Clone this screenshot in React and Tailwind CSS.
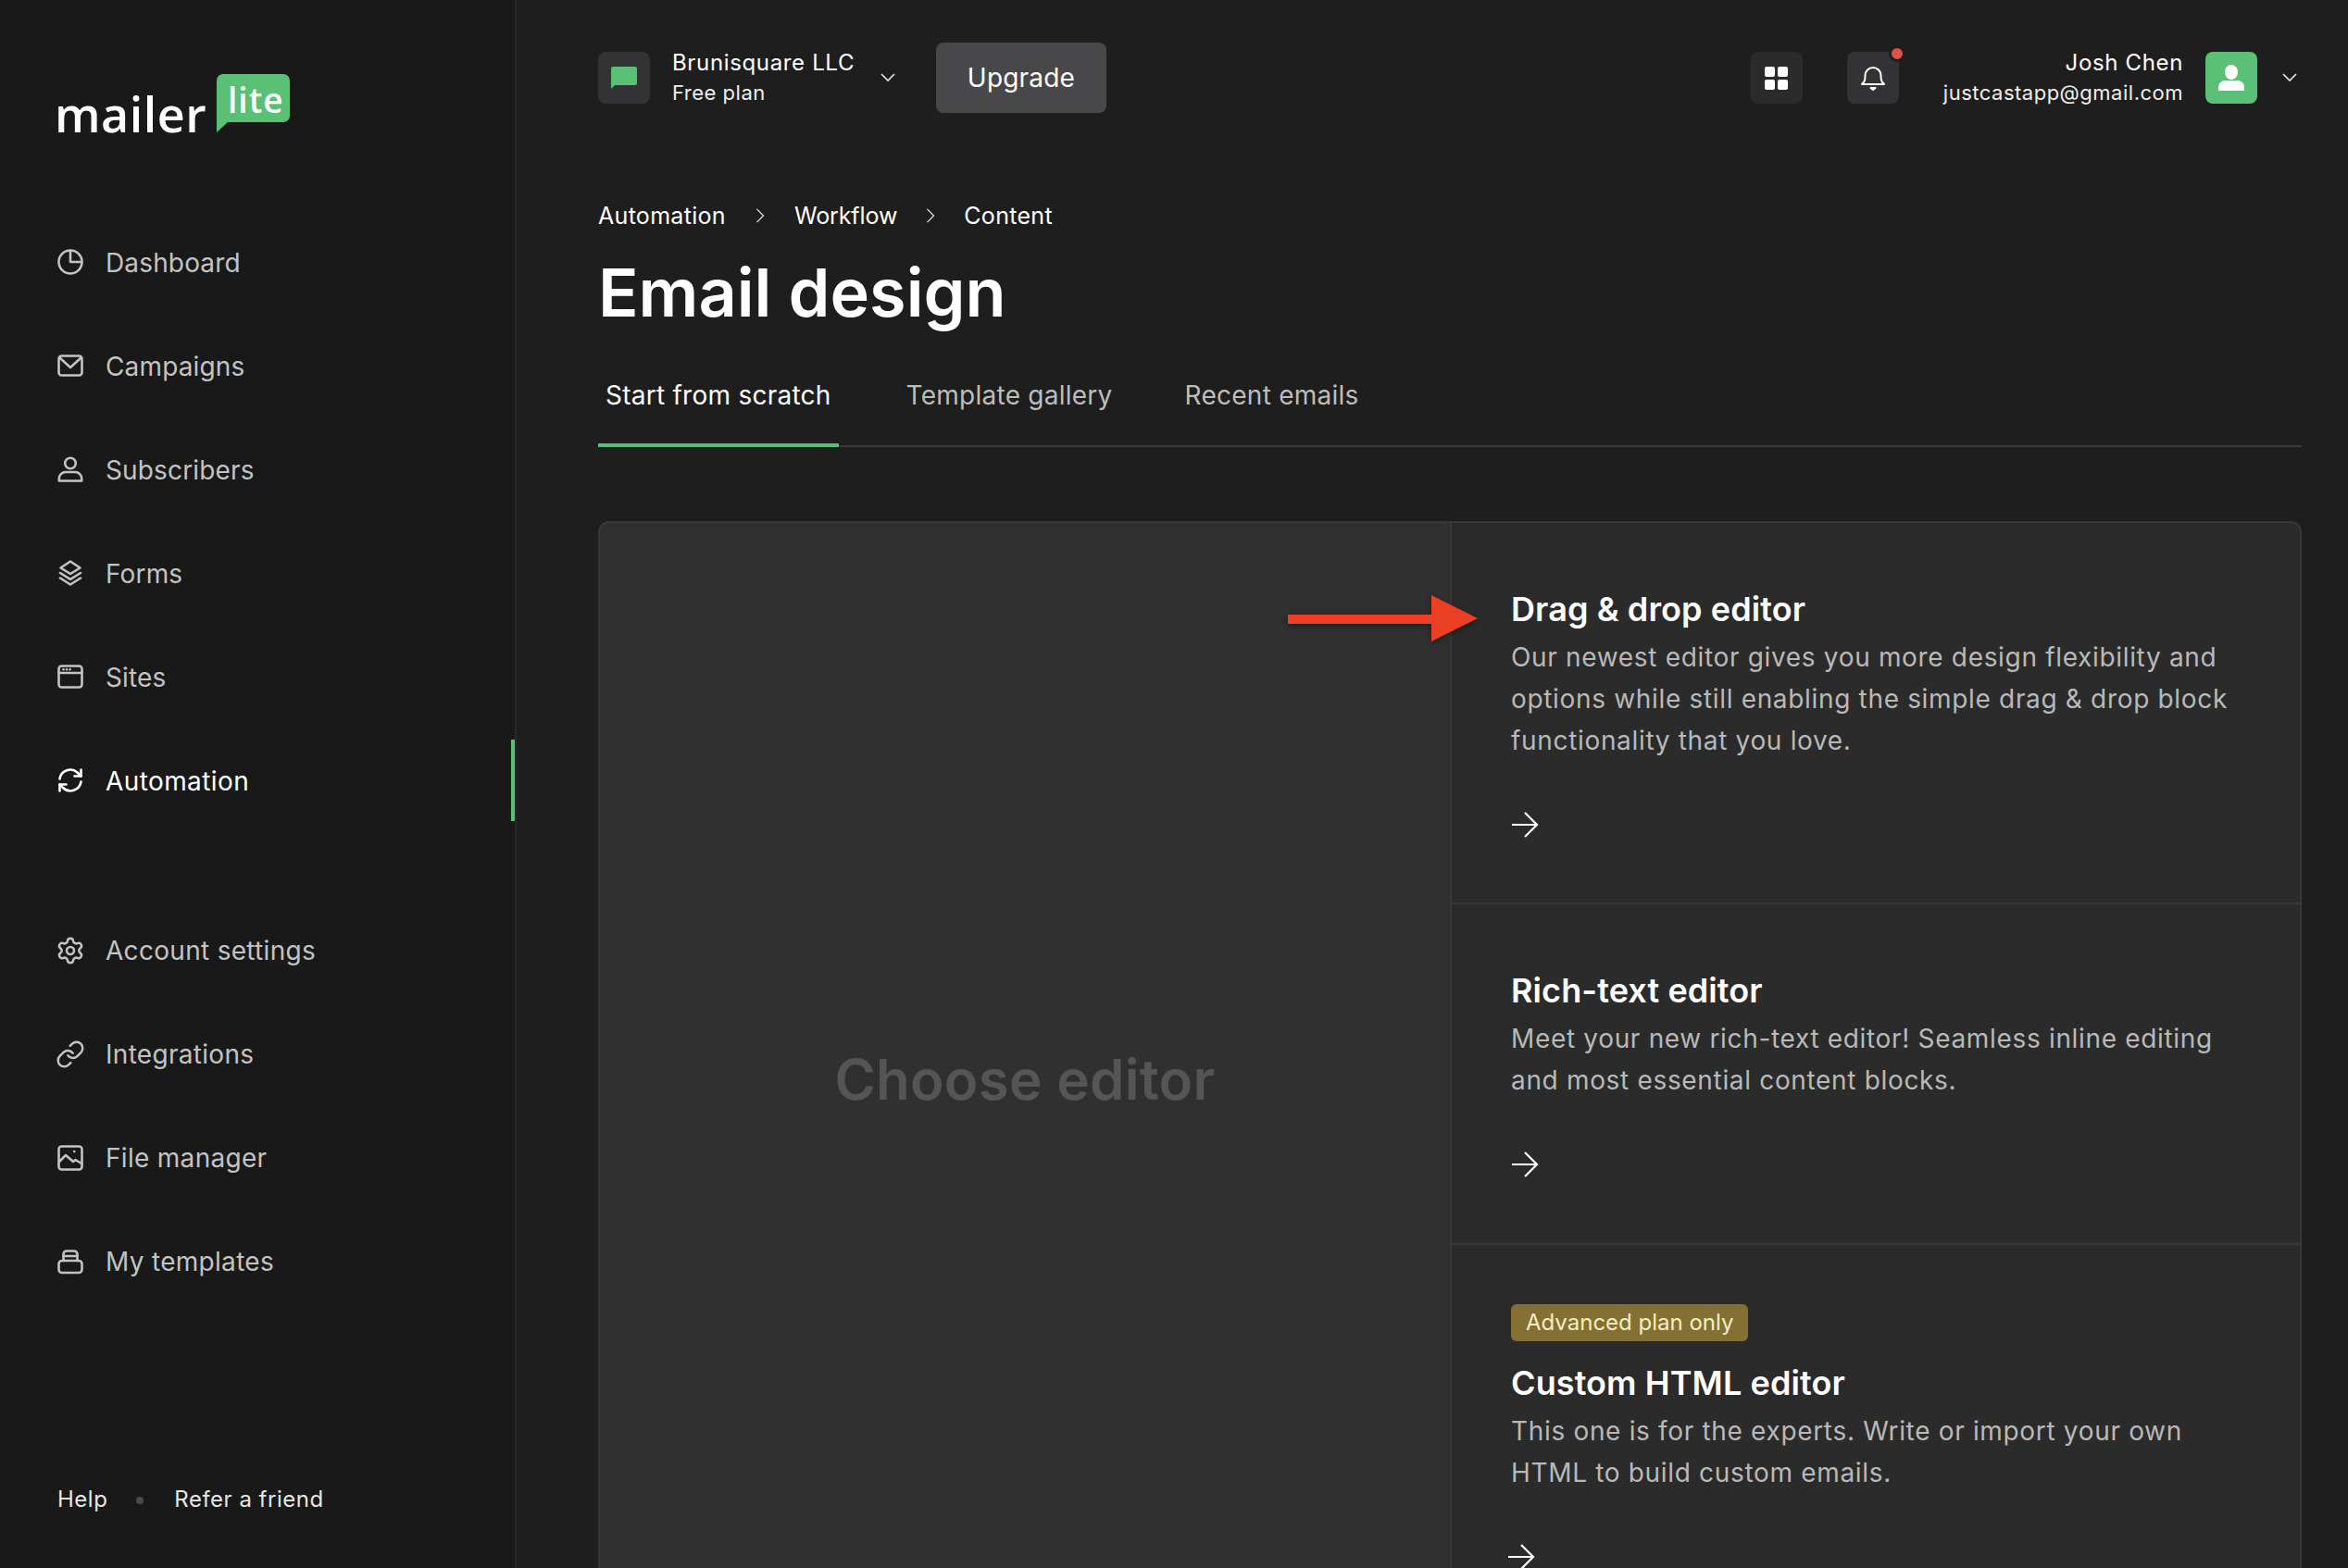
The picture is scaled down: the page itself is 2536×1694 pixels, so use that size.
import React from "react";
import { Settings, Link } from "lucide-react";

const S = ({ children, className = "" }) => (
  <svg viewBox="0 0 28 28" fill="none" stroke="currentColor" strokeWidth="2.6" strokeLinecap="round" strokeLinejoin="round" className={"w-[28px] h-[28px] shrink-0 " + className}>
    {children}
  </svg>
);

const icons = {
  dashboard: <S><circle cx="14" cy="14" r="12.5" /><path d="M14 3v11h11" /></S>,
  campaigns: <S><rect x="1.5" y="3.5" width="25" height="21" rx="3" /><path d="M3 6l11 10L25 6" /></S>,
  subscribers: <S><circle cx="14" cy="7.5" r="5.8" /><path d="M1.8 26.5v-2.5a7 7 0 0 1 7-7h10.400a7 7 0 0 1 7 7v2.500z" /></S>,
  forms: <S><path d="M14 1.500L24.500 8.500 14 15 3.500 8.500z" /><path d="M3 14l11 6.800L25 14" /><path d="M3 19.500l11 7 11-7" /></S>,
  sites: <S><rect x="1.500" y="2.500" width="25" height="23" rx="3" /><path d="M2 10h24" /><path d="M6.500 6.300h.1M10 6.300h.1M13.500 6.300h.1" /></S>,
  automation: <S><path d="M2.500 12.500A11.500 11.500 0 0 1 22 6l3.500 3.500" /><path d="M25.500 2.500v7h-7" /><path d="M25.500 15.500A11.500 11.500 0 0 1 6 22l-3.500-3.500" /><path d="M2.500 25.500v-7h7" /></S>,
  settings: <Settings className="w-[32px] h-[32px] -mx-[2px] shrink-0" strokeWidth={1.9} />,
  integrations: <Link className="w-[32px] h-[32px] -mx-[2px] shrink-0" strokeWidth={1.9} />,
  files: <S><rect x="1.500" y="1.500" width="25" height="25" rx="3" /><path d="M2 18l7-7 8 7 2.500-2 6.500 4" /><path d="M18.200 7h.1" /></S>,
  templates: <S><rect x="1.500" y="13" width="25" height="13" rx="3.500" /><path d="M6.500 13V6a3.500 3.500 0 0 1 3.500-3.500h8A3.500 3.500 0 0 1 21.500 6v7" /><path d="M6.500 8h15" /></S>,
};

const NavItem = ({ icon, label, active, lower }) => (
  <div className={"relative h-[112px] flex items-center pl-[62px] gap-[24px] text-[28px] " + (active ? "text-white tracking-[0.4px]" : lower ? "text-[#c3c3c3] tracking-[0.3px]" : "text-[#c3c3c3] tracking-[0.15px]")}>
    {icons[icon]}
    <span className={(lower ? "-mt-[1px] " : "mt-[1px] ") + "leading-[36px]"}>{label}</span>
    {active && <div className="absolute right-0 top-[12px] w-[4px] h-[88px] bg-[#5ac076]" />}
  </div>
);

const Chevron = ({ className = "" }) => (
  <svg viewBox="0 0 16 10" fill="none" stroke="currentColor" strokeWidth="1.600" className={"w-[16px] h-[10px] shrink-0 " + className}>
    <path d="M1 1l7 7 7-7" />
  </svg>
);

const Crumb = () => (
  <svg viewBox="0 0 10 18" fill="none" stroke="currentColor" strokeWidth="1.500" className="w-[10px] h-[16px] text-[#dddddd]">
    <path d="M1 1l8 8-8 8" />
  </svg>
);

const Arrow = ({ className = "" }) => (
  <svg viewBox="0 0 30 28" fill="none" stroke="currentColor" strokeWidth="2.2" className={"w-[30px] h-[28px] text-white " + className}>
    <path d="M1 14h27M15 1l13 13-13 13" />
  </svg>
);

const Section = ({ badge, title, children, last, arrowClass = "", className = "" }) => (
  <div className={"pl-[64px] pr-[60px] " + (last ? "" : "border-b-2 border-[#383838] ") + className}>
    {badge && (
      <div className="inline-block h-[40px] leading-[40px] px-[16px] rounded-[6px] bg-[#857034] text-[#f6edc0] text-[24px] mb-[23px] align-top">{badge}</div>
    )}
    <h2 className="text-[36px] leading-[44px] font-semibold tracking-[0.1px] text-white">{title}</h2>
    <p className="mt-[8px] text-[28px] leading-[45px] tracking-[0.67px] text-[#b9b9b9]">{children}</p>
    <Arrow className={"mt-[54px] " + arrowClass} />
  </div>
);

export default function App() {
  return (
    <div className="flex h-[1694px] w-[2536px] overflow-hidden bg-[#1e1e1e] antialiased" style={{ fontFamily: "Inter, 'Liberation Sans', sans-serif" }}>
      <aside className="relative flex w-[558px] shrink-0 flex-col border-r-2 border-[#2a2a2a] bg-[#191919]">
        <div className="flex h-[227px] items-start pl-[59px] pt-[80px]">
          <span className="mt-[12px] w-[175px] shrink-0 text-[52px] font-semibold leading-[62px] tracking-[0.5px] text-white" style={{ fontFamily: "'Open Sans', sans-serif" }}>mailer</span>
          <div className="relative h-[63px] w-[79px]">
            <svg viewBox="0 0 79 63" className="h-[63px] w-[79px]">
              <path d="M7 0h65a7 7 0 0 1 7 7v38a7 7 0 0 1-7 7H12L0 63V7a7 7 0 0 1 7-7z" fill="#5ac076" />
            </svg>
            <span className="absolute left-[12px] top-[3px] text-[37px] font-semibold leading-[50px] tracking-[1px] text-white" style={{ fontFamily: "'Open Sans', sans-serif" }}>lite</span>
          </div>
        </div>
        <NavItem icon="dashboard" label="Dashboard" />
        <NavItem icon="campaigns" label="Campaigns" />
        <NavItem icon="subscribers" label="Subscribers" />
        <NavItem icon="forms" label="Forms" />
        <NavItem icon="sites" label="Sites" />
        <NavItem icon="automation" label="Automation" active />
        <div className="h-[72px]" />
        <NavItem icon="settings" label="Account settings" lower />
        <NavItem icon="integrations" label="Integrations" lower />
        <NavItem icon="files" label="File manager" lower />
        <NavItem icon="templates" label="My templates" lower />
        <div className="mt-auto flex h-[90px] items-start pl-[62px] text-[24px] leading-[32px] tracking-[0.5px] text-[#e6e6e6]">
          <span>Help</span>
          <span className="ml-[31px] mr-[33px] mt-[13px] h-[8px] w-[8px] rounded-full bg-[#4a4a4a]" />
          <span>Refer a friend</span>
        </div>
      </aside>

      <main className="flex min-w-0 flex-1 flex-col pl-[88px] pr-[50px]">
        <header className="flex h-[168px] shrink-0 items-center">
          <div className="flex h-[56px] w-[56px] items-center justify-center rounded-[8px] bg-[#333335]">
            <svg viewBox="0 0 28 24" className="h-[24px] w-[28px]">
              <path d="M2 0h24a2 2 0 0 1 2 2v16a2 2 0 0 1-2 2H4l-4 4V2a2 2 0 0 1 2-2z" fill="#5ac076" />
            </svg>
          </div>
          <div className="ml-[24px] w-[196px] whitespace-nowrap text-white">
            <div className="text-[24px] leading-[32px] tracking-[0.65px]">Brunisquare LLC</div>
            <div className="text-[22px] leading-[32px] tracking-[0.5px] text-[#eeeeee]">Free plan</div>
          </div>
          <Chevron className="ml-[29px] text-[#e6e6e6]" />
          <button className="ml-[44px] h-[76px] w-[184px] rounded-[8px] bg-[#48484a] text-[28px] tracking-[0.2px] text-white">Upgrade</button>
          <div className="ml-auto flex h-[56px] w-[56px] items-center justify-center rounded-[8px] bg-[#2b2b2b]">
            <div className="grid grid-cols-2 gap-[3px]">
              <span className="h-[11px] w-[11px] rounded-[2px] bg-white" />
              <span className="h-[11px] w-[11px] rounded-[2px] bg-white" />
              <span className="h-[11px] w-[11px] rounded-[2px] bg-white" />
              <span className="h-[11px] w-[11px] rounded-[2px] bg-white" />
            </div>
          </div>
          <div className="relative ml-[48px] flex h-[56px] w-[56px] items-center justify-center rounded-[8px] bg-[#333335]">
            <svg viewBox="0 0 28 28" fill="none" stroke="white" strokeWidth="2" strokeLinejoin="round" className="h-[28px] w-[28px]">
              <path d="M2 21c3-3 3.500-4 3.500-9.500a8.500 8.500 0 0 1 17 0C22.500 17 23 18 26 21z" />
              <path d="M11.500 25h5l-2.500 2z" fill="white" />
            </svg>
            <span className="absolute -right-[7px] -top-[7px] h-[18px] w-[18px] rounded-full border-[3px] border-[#1e1e1e] bg-[#e0504d]" />
          </div>
          <div className="ml-[48px] text-right text-white">
            <div className="text-[24px] leading-[32px] tracking-[0.65px]">Josh Chen</div>
            <div className="text-[22px] leading-[32px] tracking-[0.5px] text-[#eeeeee]">justcastapp@gmail.com</div>
          </div>
          <div className="ml-[24px] flex h-[56px] w-[56px] items-center justify-center rounded-[8px] bg-[#5ac076]">
            <svg viewBox="0 0 28 28" fill="white" className="h-[28px] w-[28px]">
              <ellipse cx="14" cy="8" rx="7" ry="8" />
              <path d="M0 28v-4a7 7 0 0 1 7-7h14a7 7 0 0 1 7 7v4z" />
            </svg>
          </div>
          <Chevron className="ml-[27px] mr-[5px] text-[#e6e6e6]" />
        </header>

        <nav className="mt-[50px] flex h-[30px] items-center text-[25px] leading-[30px] tracking-[0.3px] text-white">
          <span>Automation</span>
          <span className="mx-[32px]"><Crumb /></span>
          <span className="tracking-[-0.1px]">Workflow</span>
          <span className="mx-[31px]"><Crumb /></span>
          <span>Content</span>
        </nav>
        <h1 className="mt-[24px] text-[72px] font-semibold leading-[88px] text-white">Email design</h1>

        <div className="mt-[49px] flex shrink-0 border-b-2 border-[#383838] text-[28px] leading-[36px] tracking-[0.25px]">
          <div className="-mb-[2px] border-b-4 border-[#5ac076] px-[8px] pb-[34px] text-white">Start from scratch</div>
          <div className="ml-[73px] text-[#bdbdbd]">Template gallery</div>
          <div className="ml-[78px] text-[#bdbdbd]">Recent emails</div>
        </div>

        <div className="relative mt-[80px] flex h-[1206px] shrink-0 rounded-t-[12px] border-2 border-[#383838] bg-[#2b2b2b]">
          <div className="flex w-[920px] shrink-0 items-center justify-center rounded-tl-[10px] border-r-2 border-[#383838] bg-[#303030] text-[60px] font-semibold tracking-[0.3px] text-[#555555]">Choose editor</div>
          <div className="min-w-0 flex-1">
            <Section title="Drag & drop editor" className="h-[412px] pt-[71px]">
              Our newest editor gives you more design flexibility and options while still enabling the simple drag & drop block functionality that you love.
            </Section>
            <Section title="Rich-text editor" className="h-[368px] pt-[71px]">
              Meet your new rich-text editor! Seamless inline editing and most essential content blocks.
            </Section>
            <Section title="Custom HTML editor" badge="Advanced plan only" last arrowClass="-ml-[4px]" className="pt-[64px]">
              This one is for the experts. Write or import your own HTML to build custom emails.
            </Section>
          </div>
          <svg viewBox="0 0 205 50" className="absolute left-[743px] top-[78px] h-[50px] w-[205px] drop-shadow-[0_2px_3px_rgba(0,0,0,0.4)]">
            <path d="M0 21h155V0l50 25-50 25V31H0z" fill="#ec3f24" />
          </svg>
        </div>
      </main>
    </div>
  );
}
